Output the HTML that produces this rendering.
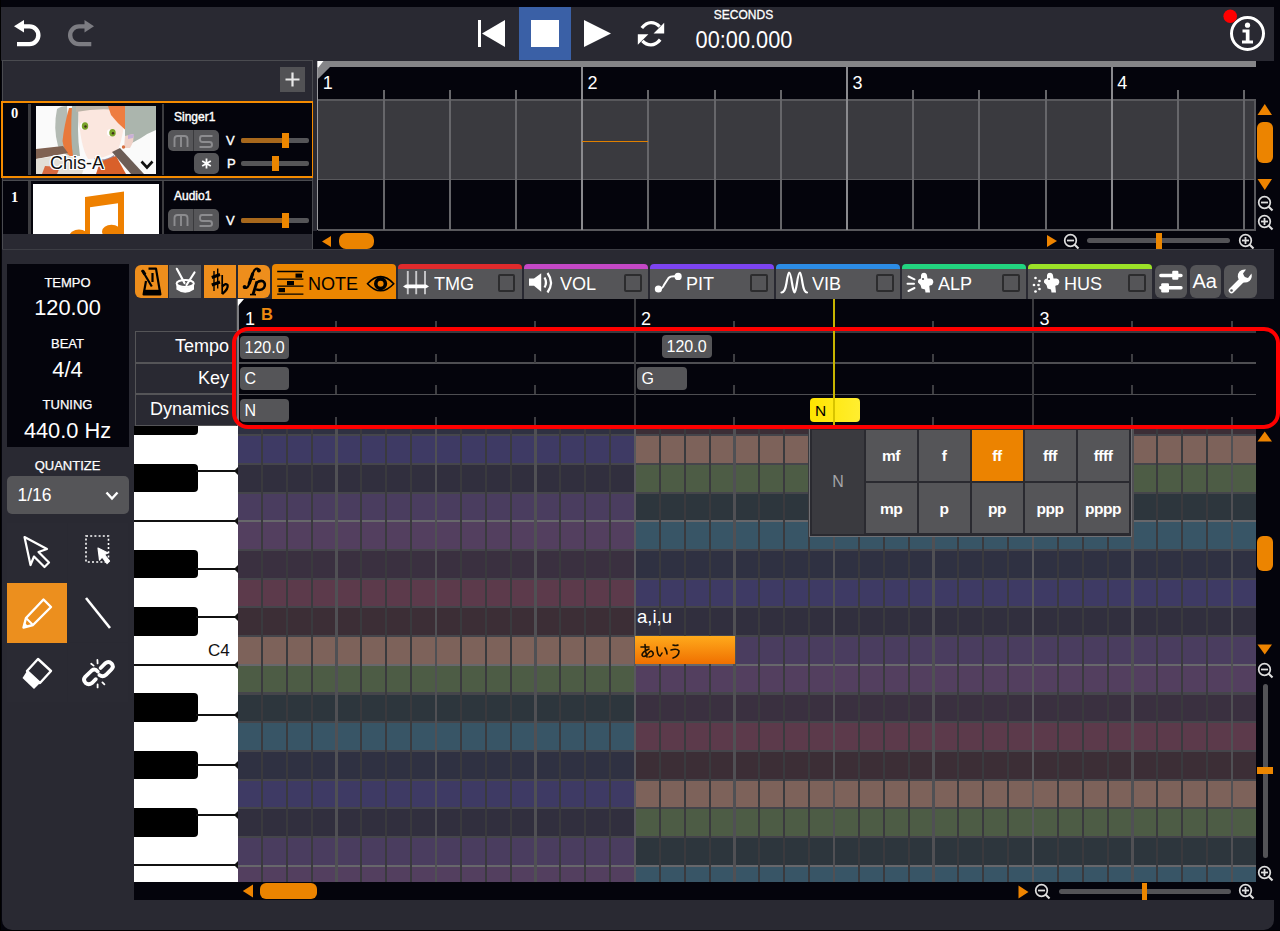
<!DOCTYPE html><html><head><meta charset="utf-8"><style>
html,body{margin:0;padding:0;}
body{width:1280px;height:931px;position:relative;overflow:hidden;background:#04040c;font-family:"Liberation Sans", sans-serif;}
div{box-sizing:border-box;}
svg{position:absolute;overflow:visible;}
</style></head><body>
<div style="position:absolute;left:1px;top:7px;width:1273px;height:54px;background:#292932;"></div>
<svg style="left:14px;top:19px;" width="30" height="30" viewBox="0 0 30 30"><path d="M9 7.4 H15.5 A8.85 8.85 0 0 1 15.5 25.1 H3" fill="none" stroke="#fff" stroke-width="4.4"/><path d="M0 7.2 L10 1 L10 13.4 Z" fill="#fff"/></svg>
<svg style="left:66px;top:19px;" width="30" height="30" viewBox="0 0 30 30"><path d="M19.5 7.4 H13 A8.85 8.85 0 0 0 13 25.1 H25.3" fill="none" stroke="#7c7c82" stroke-width="4.4"/><path d="M28 7.2 L18.5 1 L18.5 13.4 Z" fill="#7c7c82"/></svg>
<div style="position:absolute;left:519px;top:7px;width:52px;height:53px;background:#3a60a6;"></div>
<svg style="left:476px;top:19px;" width="32" height="30" viewBox="0 0 32 30"><rect x="2" y="1" width="3" height="27" fill="#fff"/><path d="M29 1 L29 28 L6 14.5 Z" fill="#fff"/></svg>
<div style="position:absolute;left:531px;top:20px;width:28px;height:27px;background:#fff;"></div>
<svg style="left:583px;top:19px;" width="30" height="30" viewBox="0 0 30 30"><path d="M1 1 L28 14.5 L1 28 Z" fill="#fff"/></svg>
<svg style="left:636px;top:21px;" width="30" height="26" viewBox="0 0 30 26"><path d="M5.8 7 Q10 1.6 15 1.6 Q20 1.6 23.6 5.6" fill="none" stroke="#fff" stroke-width="3.3"/><path d="M28.2 1.8 L28.2 12.6 L17.6 12.6 Z" fill="#fff"/><path d="M24.2 18.6 Q20 23.8 15 23.8 Q10 23.8 6.4 19.8" fill="none" stroke="#fff" stroke-width="3.3"/><path d="M1.8 13.2 L12.4 13.2 L1.8 23.8 Z" fill="#fff"/></svg>
<div style="position:absolute;left:593.5px;width:300px;text-align:center;top:9px;font-size:12px;line-height:1;color:#fff;white-space:nowrap;-webkit-text-stroke:0.3px #fff;">SECONDS</div>
<div style="position:absolute;left:593.5px;width:300px;text-align:center;top:29.2px;font-size:23.4px;line-height:1;color:#fff;white-space:nowrap;transform:scaleX(0.93);">00:00.000</div>
<svg style="left:1229px;top:15px;" width="38" height="38" viewBox="0 0 38 38"><circle cx="18.5" cy="18.5" r="16" fill="none" stroke="#fff" stroke-width="3"/><circle cx="18.5" cy="10.2" r="2.6" fill="#fff"/><path d="M13.5 14.5 H20.5 V25.5 H24 V28.5 H13 V25.5 H16.8 V17.5 H13.5 Z" fill="#fff"/></svg>
<svg style="left:1223px;top:9px;" width="15" height="15" viewBox="0 0 15 15"><circle cx="7.2" cy="7.2" r="6.8" fill="#f00"/></svg>
<div style="position:absolute;left:2px;top:60px;width:311px;height:190px;background:#292932;border:1px solid #4a4b50;"></div>
<div style="position:absolute;left:280px;top:67px;width:25px;height:25px;background:#525255;"></div>
<svg style="left:280px;top:67px;" width="25" height="25" viewBox="0 0 25 25"><path d="M12.5 5.5 V19.5 M5.5 12.5 H19.5" stroke="#e8e8e8" stroke-width="2.2"/></svg>
<div style="position:absolute;left:1px;top:101px;width:313px;height:77px;background:#04040c;border:2.8px solid #f58b00;"></div>
<div style="position:absolute;left:28px;top:104px;width:2.5px;height:71px;background:#3c3c40;"></div>
<div style="position:absolute;left:162px;top:104px;width:2px;height:71px;background:#3c3c40;"></div>
<div style="position:absolute;left:11px;top:106px;font-size:14.5px;line-height:1;color:#fff;white-space:nowrap;font-family:&quot;Liberation Serif&quot;,serif;font-weight:bold;">0</div>
<svg style="left:36px;top:106px;" width="120" height="68" viewBox="0 0 120 68">
<rect x="0" y="0" width="120" height="68" fill="#fafafa"/>
<path d="M21 3 Q25 0 31 0 L34 50 Q26 48 22 40 Q17 22 21 3 Z" fill="#b4bbb4"/>
<path d="M33 2 Q28 20 26.5 35 Q28 46 34 50 L37.5 50 Q35 30 37.5 2 Z" fill="#e8793c"/>
<path d="M36 0 L44 0 Q40 20 44 50 L37 50 Q34 30 36 0 Z" fill="#a9b3ab"/>
<path d="M42 3 L89 3 Q88 30 82 44 Q70 53 52 53 Q44 40 42 3 Z" fill="#fbe7df"/>
<path d="M40 0 L90 0 L90 5 Q65 1 40 6 Z" fill="#bcb3a6"/>
<path d="M72 0 L90 0 L89.5 24 Q82 18 75 9 Z" fill="#ee7d40"/>
<path d="M89 0 L120 0 L120 24 Q112 27 105 32 Q98 36 92 39 L89 30 Z" fill="#abb5ad"/>
<ellipse cx="47" cy="20" rx="3" ry="3.4" fill="#fff"/><ellipse cx="49" cy="20" rx="3.2" ry="3.8" fill="#7aa42a"/><circle cx="49.5" cy="20.5" r="1.2" fill="#40301a"/>
<ellipse cx="74" cy="26.7" rx="3" ry="3.4" fill="#fff"/><ellipse cx="76.5" cy="26.7" rx="3.2" ry="3.8" fill="#7aa42a"/><circle cx="77" cy="27.2" r="1.2" fill="#40301a"/>
<path d="M89 30 L97 28 Q99 34 94 42 L88 42 Z" fill="#f0d2c8"/><path d="M92 29 L98 28 L97 32 L92 33 Z" fill="#c8b0d8"/>
<circle cx="87.5" cy="41" r="1.7" fill="#d87040"/>
<path d="M0 43 L27 40 L32 47 L0 53 Z" fill="#806252"/>
<path d="M0 53 L30 49 L50 56 L46 68 L0 68 Z" fill="#e2ded6"/>
<path d="M9 60 L24 61 L21 68 L6 68 Z" fill="#d86a40"/>
<path d="M58 52 Q68 56 78 49 L80 56 Q70 60 60 58 Z" fill="#9a8a9a"/>
<path d="M64 56 L80 50 L90 68 L60 68 Z" fill="#d9602a"/>
<path d="M76 46 L84 42 L108 68 L95 68 Z" fill="#6c5d56"/>
</svg>
<div style="position:absolute;left:50px;top:154px;font-size:18px;line-height:1;color:#111;white-space:nowrap;text-shadow:1px 0 0 #fff,-1px 0 0 #fff,0 1px 0 #fff,0 -1px 0 #fff,1px 1px 0 #fff,-1px -1px 0 #fff,1px -1px 0 #fff,-1px 1px 0 #fff;">Chis-A</div>
<svg style="left:140px;top:160px;" width="14" height="10" viewBox="0 0 14 10"><path d="M1.5 1.5 L7 7.5 L12.5 1.5" fill="none" stroke="#111" stroke-width="2.6"/></svg>
<div style="position:absolute;left:3px;top:179.5px;width:309.5px;height:1.5px;background:#4a4b50;"></div>
<div style="position:absolute;left:3px;top:181px;width:309px;height:53px;background:#04040c;"></div>
<div style="position:absolute;left:27.5px;top:181px;width:3.5px;height:53px;background:#3c3c40;"></div>
<div style="position:absolute;left:162px;top:181px;width:2px;height:53px;background:#3c3c40;"></div>
<div style="position:absolute;left:11px;top:190px;font-size:14.5px;line-height:1;color:#fff;white-space:nowrap;font-family:&quot;Liberation Serif&quot;,serif;font-weight:bold;">1</div>
<div style="position:absolute;left:33px;top:184px;width:126px;height:50px;background:#fff;"></div>
<svg style="left:33px;top:184px;clip-path:inset(0 0 0 0);" width="126" height="50" viewBox="0 0 126 50"><path d="M52 13 L91 7.5 L91 50 L85 50 L85 19.2 L57 23.2 L57 50 L52 50 Z" fill="#ee8000"/><ellipse cx="46" cy="52" rx="9.5" ry="6.5" fill="#ee8000"/><ellipse cx="78.5" cy="47.5" rx="9.5" ry="6.8" fill="#ee8000"/></svg>
<div style="position:absolute;left:174px;top:110.5px;font-size:12px;line-height:1;color:#fff;white-space:nowrap;-webkit-text-stroke:0.4px #fff;">Singer1</div>
<div style="position:absolute;left:168px;top:129.5px;width:51px;height:21.5px;background:#565659;border-radius:5px;"></div>
<div style="position:absolute;left:192.5px;top:129.5px;width:1.5px;height:21.5px;background:#3a3a3d;"></div>
<svg style="left:172px;top:132.5px;" width="18" height="16" viewBox="0 0 18 16"><path d="M2.5 14 V6 Q2.5 3 5.5 3 H12.5 Q15.5 3 15.5 6 V14 M9 3.5 V14" fill="none" stroke="#8c8c8f" stroke-width="1.9"/></svg>
<svg style="left:197px;top:132.5px;" width="18" height="16" viewBox="0 0 18 16"><path d="M15.5 3 H5 Q3 3 3 5.5 V6.5 Q3 9 5.5 9 H12.5 Q15 9 15 11.5 V12 Q15 14 12.5 14 H2.5" fill="none" stroke="#8c8c8f" stroke-width="1.9"/></svg>
<div style="position:absolute;left:194px;top:152.5px;width:25px;height:21px;background:#565659;border-radius:5px;"></div>
<svg style="left:194px;top:152.5px;" width="25" height="21" viewBox="0 0 25 21"><path d="M12.5 5.5 V15.5 M8.2 8 L16.8 13 M8.2 13 L16.8 8" stroke="#fff" stroke-width="1.8"/></svg>
<div style="position:absolute;left:226px;top:134px;font-size:13px;line-height:1;color:#fff;white-space:nowrap;-webkit-text-stroke:0.4px #fff;">V</div>
<div style="position:absolute;left:227px;top:157px;font-size:13px;line-height:1;color:#fff;white-space:nowrap;-webkit-text-stroke:0.4px #fff;">P</div>
<div style="position:absolute;left:241px;top:138px;width:68px;height:4.5px;background:#555558;border-radius:2px;"></div>
<div style="position:absolute;left:241px;top:138px;width:41px;height:4.5px;background:#a8681c;border-radius:2px 0 0 2px;"></div>
<div style="position:absolute;left:282px;top:132.5px;width:7px;height:15px;background:#ec8600;"></div>
<div style="position:absolute;left:241px;top:161px;width:68px;height:4.5px;background:#555558;border-radius:2px;"></div>
<div style="position:absolute;left:272px;top:155.5px;width:7px;height:15px;background:#ec8600;"></div>
<div style="position:absolute;left:174px;top:189.5px;font-size:12px;line-height:1;color:#fff;white-space:nowrap;-webkit-text-stroke:0.4px #fff;">Audio1</div>
<div style="position:absolute;left:168px;top:209px;width:51px;height:21.5px;background:#565659;border-radius:5px;"></div>
<div style="position:absolute;left:192.5px;top:209px;width:1.5px;height:21.5px;background:#3a3a3d;"></div>
<svg style="left:172px;top:212px;" width="18" height="16" viewBox="0 0 18 16"><path d="M2.5 14 V6 Q2.5 3 5.5 3 H12.5 Q15.5 3 15.5 6 V14 M9 3.5 V14" fill="none" stroke="#8c8c8f" stroke-width="1.9"/></svg>
<svg style="left:197px;top:212px;" width="18" height="16" viewBox="0 0 18 16"><path d="M15.5 3 H5 Q3 3 3 5.5 V6.5 Q3 9 5.5 9 H12.5 Q15 9 15 11.5 V12 Q15 14 12.5 14 H2.5" fill="none" stroke="#8c8c8f" stroke-width="1.9"/></svg>
<div style="position:absolute;left:226px;top:214px;font-size:13px;line-height:1;color:#fff;white-space:nowrap;-webkit-text-stroke:0.4px #fff;">V</div>
<div style="position:absolute;left:241px;top:218px;width:68px;height:4.5px;background:#555558;border-radius:2px;"></div>
<div style="position:absolute;left:241px;top:218px;width:41px;height:4.5px;background:#a8681c;border-radius:2px 0 0 2px;"></div>
<div style="position:absolute;left:282px;top:212.5px;width:7px;height:15px;background:#ec8600;"></div>
<div style="position:absolute;left:313px;top:60px;width:4px;height:171px;background:#292932;"></div>
<div style="position:absolute;left:313px;top:231px;width:4px;height:19px;background:#04040c;"></div>
<div style="position:absolute;left:317px;top:61px;width:939px;height:189px;background:#04040c;"></div>
<svg style="left:317px;top:61px;" width="939" height="20" viewBox="0 0 939 20"><path d="M0 0 L939 0 L939 6 L13 6 L1.5 17.5 L0 17.5 Z" fill="#858588"/><path d="M0.5 0 L6.5 0 L0.5 7.5 Z" fill="#fff"/></svg>
<div style="position:absolute;left:318px;top:100px;width:938px;height:80px;background:#3a3a3f;"></div>
<div style="position:absolute;left:318px;top:99px;width:938px;height:1.5px;background:#58585c;"></div>
<div style="position:absolute;left:318px;top:178.8px;width:938px;height:1.5px;background:#58585c;"></div>
<div style="position:absolute;left:318px;top:229.3px;width:938px;height:1.5px;background:#58585c;"></div>
<div style="position:absolute;left:316.5px;top:67px;width:1.8px;height:163px;background:#9a9a9e;"></div>
<div style="position:absolute;left:382.5px;top:90px;width:2px;height:140px;background:#66666a;"></div>
<div style="position:absolute;left:448.7px;top:90px;width:2px;height:140px;background:#66666a;"></div>
<div style="position:absolute;left:514.9px;top:90px;width:2px;height:140px;background:#66666a;"></div>
<div style="position:absolute;left:581.1px;top:67px;width:2px;height:163px;background:#8a8a8e;"></div>
<div style="position:absolute;left:647.3px;top:90px;width:2px;height:140px;background:#66666a;"></div>
<div style="position:absolute;left:713.5px;top:90px;width:2px;height:140px;background:#66666a;"></div>
<div style="position:absolute;left:779.7px;top:90px;width:2px;height:140px;background:#66666a;"></div>
<div style="position:absolute;left:845.9px;top:67px;width:2px;height:163px;background:#8a8a8e;"></div>
<div style="position:absolute;left:912.1px;top:90px;width:2px;height:140px;background:#66666a;"></div>
<div style="position:absolute;left:978.3px;top:90px;width:2px;height:140px;background:#66666a;"></div>
<div style="position:absolute;left:1044.5px;top:90px;width:2px;height:140px;background:#66666a;"></div>
<div style="position:absolute;left:1110.7px;top:67px;width:2px;height:163px;background:#8a8a8e;"></div>
<div style="position:absolute;left:1176.9px;top:90px;width:2px;height:140px;background:#66666a;"></div>
<div style="position:absolute;left:1243.1px;top:90px;width:2px;height:140px;background:#66666a;"></div>
<div style="position:absolute;left:322.8px;top:74px;font-size:18px;line-height:1;color:#fff;white-space:nowrap;">1</div>
<div style="position:absolute;left:587.6px;top:74px;font-size:18px;line-height:1;color:#fff;white-space:nowrap;">2</div>
<div style="position:absolute;left:852.4000000000001px;top:74px;font-size:18px;line-height:1;color:#fff;white-space:nowrap;">3</div>
<div style="position:absolute;left:1117.2px;top:74px;font-size:18px;line-height:1;color:#fff;white-space:nowrap;">4</div>
<div style="position:absolute;left:582px;top:140.5px;width:66px;height:1.6px;background:#e08000;"></div>
<div style="position:absolute;left:1254.3px;top:99px;width:1.6px;height:131.5px;background:#58585c;"></div>
<svg style="left:321px;top:236px;" width="11" height="11" viewBox="0 0 11 11"><path d="M10 0 L10 11 L1 5.5 Z" fill="#ee8400"/></svg>
<div style="position:absolute;left:339px;top:232.5px;width:35px;height:16px;background:#ec8400;border-radius:7px;"></div>
<svg style="left:1047px;top:235px;" width="11" height="12" viewBox="0 0 11 12"><path d="M0 0 L0 12 L10 6 Z" fill="#ee8400"/></svg>
<svg style="left:1063px;top:233px;" width="17" height="17" viewBox="0 0 17 17"><circle cx="7.5" cy="7.5" r="5.8" fill="none" stroke="#dedede" stroke-width="1.7"/><path d="M11.5 11.5 L15.5 15.5" stroke="#dedede" stroke-width="2.2"/><path d="M4 7.5 H11" stroke="#dedede" stroke-width="1.8"/></svg>
<div style="position:absolute;left:1087px;top:237.5px;width:143px;height:5px;background:#535357;border-radius:3px;"></div>
<div style="position:absolute;left:1156px;top:232.5px;width:6px;height:16px;background:#ec8600;"></div>
<svg style="left:1238px;top:233px;" width="17" height="17" viewBox="0 0 17 17"><circle cx="7.5" cy="7.5" r="5.8" fill="none" stroke="#dedede" stroke-width="1.7"/><path d="M11.5 11.5 L15.5 15.5" stroke="#dedede" stroke-width="2.2"/><path d="M4 7.5 H11" stroke="#dedede" stroke-width="1.8"/><path d="M7.5 4 V11" stroke="#dedede" stroke-width="1.8"/></svg>
<div style="position:absolute;left:1256px;top:61px;width:18px;height:189px;background:#04040c;"></div>
<svg style="left:1257px;top:103px;" width="16" height="13" viewBox="0 0 16 13"><path d="M0.5 12 L15 12 L7.75 1 Z" fill="#ee8400"/></svg>
<div style="position:absolute;left:1257px;top:122px;width:16px;height:41px;background:#ec8400;border-radius:6px;"></div>
<svg style="left:1257px;top:178px;" width="16" height="13" viewBox="0 0 16 13"><path d="M0.5 1 L15 1 L7.75 12 Z" fill="#ee8400"/></svg>
<svg style="left:1257px;top:195px;" width="17" height="17" viewBox="0 0 17 17"><circle cx="7.5" cy="7.5" r="5.8" fill="none" stroke="#dedede" stroke-width="1.7"/><path d="M11.5 11.5 L15.5 15.5" stroke="#dedede" stroke-width="2.2"/><path d="M4 7.5 H11" stroke="#dedede" stroke-width="1.8"/></svg>
<svg style="left:1257px;top:214px;" width="17" height="17" viewBox="0 0 17 17"><circle cx="7.5" cy="7.5" r="5.8" fill="none" stroke="#dedede" stroke-width="1.7"/><path d="M11.5 11.5 L15.5 15.5" stroke="#dedede" stroke-width="2.2"/><path d="M4 7.5 H11" stroke="#dedede" stroke-width="1.8"/><path d="M7.5 4 V11" stroke="#dedede" stroke-width="1.8"/></svg>
<div style="position:absolute;left:1.5px;top:249px;width:1272.5px;height:680.5px;background:#292932;border-top:1.5px solid #3c3d44;border-radius:0 0 10px 10px;"></div>
<div style="position:absolute;left:7px;top:264px;width:121.5px;height:183px;background:#04040c;"></div>
<div style="position:absolute;left:-82.5px;width:300px;text-align:center;top:275.5px;font-size:13px;line-height:1;color:#fff;white-space:nowrap;-webkit-text-stroke:0.25px #fff;">TEMPO</div>
<div style="position:absolute;left:-82.5px;width:300px;text-align:center;top:297px;font-size:21.8px;line-height:1;color:#fff;white-space:nowrap;">120.00</div>
<div style="position:absolute;left:-82.5px;width:300px;text-align:center;top:336.5px;font-size:13px;line-height:1;color:#fff;white-space:nowrap;-webkit-text-stroke:0.25px #fff;">BEAT</div>
<div style="position:absolute;left:-82.5px;width:300px;text-align:center;top:359px;font-size:21.8px;line-height:1;color:#fff;white-space:nowrap;">4/4</div>
<div style="position:absolute;left:-82.5px;width:300px;text-align:center;top:397.5px;font-size:13px;line-height:1;color:#fff;white-space:nowrap;-webkit-text-stroke:0.25px #fff;">TUNING</div>
<div style="position:absolute;left:-82.5px;width:300px;text-align:center;top:419.7px;font-size:21.8px;line-height:1;color:#fff;white-space:nowrap;">440.0 Hz</div>
<div style="position:absolute;left:-82.5px;width:300px;text-align:center;top:459px;font-size:13px;line-height:1;color:#fff;white-space:nowrap;-webkit-text-stroke:0.25px #fff;">QUANTIZE</div>
<div style="position:absolute;left:7px;top:475.5px;width:121.5px;height:38.5px;background:#555558;border-radius:5px;"></div>
<div style="position:absolute;left:17.5px;top:486.5px;font-size:17.5px;line-height:1;color:#fff;white-space:nowrap;">1/16</div>
<svg style="left:105px;top:491px;" width="15" height="10" viewBox="0 0 15 10"><path d="M1.5 1.5 L7 7.5 L12.5 1.5" fill="none" stroke="#fff" stroke-width="2.4"/></svg>
<div style="position:absolute;left:7px;top:523px;width:60px;height:59.5px;background:#2a2a33;"></div>
<div style="position:absolute;left:67.5px;top:523px;width:60px;height:59.5px;background:#2a2a33;"></div>
<div style="position:absolute;left:67.5px;top:582.5px;width:60px;height:59.5px;background:#2a2a33;"></div>
<div style="position:absolute;left:7px;top:642.5px;width:60px;height:59.5px;background:#2a2a33;"></div>
<div style="position:absolute;left:67.5px;top:642.5px;width:60px;height:59.5px;background:#2a2a33;"></div>
<div style="position:absolute;left:7px;top:582.5px;width:60px;height:60px;background:#ec8f1e;"></div>
<div style="position:absolute;left:7px;top:582.5px;width:60px;height:60px;background:#ec8f1e;"></div>
<svg style="left:22px;top:535px;" width="32" height="35" viewBox="0 0 32 35"><path d="M2.5 2 L25 14 L16.5 17 L27 27.5 L22.5 32 L12 21.5 L8.5 30 Z" fill="none" stroke="#fff" stroke-width="2.2" stroke-linejoin="round"/></svg>
<svg style="left:85px;top:535px;" width="28" height="34" viewBox="0 0 28 34"><rect x="1" y="1" width="22.5" height="26" fill="none" stroke="#fff" stroke-width="1.6" stroke-dasharray="2,2.2"/><path d="M13 13 L23 18 L19.5 19.5 L24.5 26 L22 28.5 L17 22 L14.5 25 Z" fill="#fff" stroke="#fff" stroke-width="1.2" stroke-linejoin="round"/></svg>
<svg style="left:21px;top:597px;" width="32" height="33" viewBox="0 0 32 33"><path d="M22.5 2.5 L30 10 L12 28 L2.5 30.5 L5 21 Z" fill="none" stroke="#fff" stroke-width="2.4" stroke-linejoin="round"/><path d="M5 21 L12 28" stroke="#fff" stroke-width="2"/><path d="M3 25 L7.5 29.5 L2.5 30.5 Z" fill="#fff"/></svg>
<svg style="left:84px;top:596px;" width="28" height="34" viewBox="0 0 28 34"><path d="M2 2 L26 32" stroke="#fff" stroke-width="2.6"/></svg>
<svg style="left:21px;top:657px;" width="32" height="33" viewBox="0 0 32 33"><path d="M17 2 L30 14 L19 26 L6 14 Z" fill="none" stroke="#fff" stroke-width="2.4" stroke-linejoin="round"/><path d="M6 14 L19 26 L13 32 L1.5 21 Z" fill="#fff"/></svg>
<svg style="left:75px;top:650px;" width="45" height="45" viewBox="0 0 45 45"><path d="M22.8 21.6 Q20 18.2 16.6 20.6 L10.2 26.8 Q7.6 30 10.6 33 Q13.8 35.6 17 33 L20.8 29.2" fill="none" stroke="#fff" stroke-width="3.8" stroke-linecap="round"/><path d="M25.6 18 L30.4 13.2 Q33.6 10.4 36.6 13.6 Q39.2 16.6 36.4 19.4 L31 24.8 Q27.8 27.6 24.4 25" fill="none" stroke="#fff" stroke-width="3.8" stroke-linecap="round"/><path d="M16.2 13.8 L18.6 15.6 M22.4 10 L22.6 13.4 M27.4 32.4 L29.4 34.4 M22.6 34.4 L22.6 37.4" stroke="#fff" stroke-width="1.8" stroke-linecap="round"/></svg>
<div style="position:absolute;left:134.8px;top:264.6px;width:33.1px;height:33.1px;background:#ee8e1c;border-radius:6px 0 0 6px;"></div>
<div style="position:absolute;left:169px;top:264.6px;width:32.2px;height:33.1px;background:#555558;"></div>
<div style="position:absolute;left:203.6px;top:264.6px;width:32.3px;height:33.1px;background:#ee8e1c;"></div>
<div style="position:absolute;left:238.4px;top:264.6px;width:31.6px;height:33.1px;background:#ee8e1c;border-radius:0 6px 6px 0;"></div>
<svg style="left:134px;top:263px;" width="34" height="34" viewBox="0 0 34 34"><path d="M14.5 5.6 L22 5.6 L26.4 31.4 L9.6 31.4 L12 18" fill="none" stroke="#000" stroke-width="2.2" stroke-linejoin="round"/><rect x="9.8" y="26.8" width="16.5" height="4.6" fill="#000"/><path d="M8 7 L17.8 23.5" stroke="#000" stroke-width="2.2"/><path d="M8.5 7.5 L11 11.5" stroke="#000" stroke-width="3.2"/><rect x="17.4" y="10" width="2.2" height="9" fill="#000"/></svg>
<svg style="left:169px;top:263px;" width="34" height="34" viewBox="0 0 34 34"><path d="M7.8 5.8 L15.5 20 M25.5 9.5 L17.5 22" stroke="#fff" stroke-width="2.2" stroke-linecap="round"/><ellipse cx="16.2" cy="20.5" rx="8.6" ry="3.6" fill="none" stroke="#fff" stroke-width="2"/><path d="M7.4 21.5 V26.5 Q16.2 33 25 26.5 V21.5 Q16.2 28 7.4 21.5 Z" fill="#fff"/></svg>
<svg style="left:202px;top:263px;" width="34" height="34" viewBox="0 0 34 34"><path d="M12 8 V28 M15.7 5.5 V25.5" stroke="#000" stroke-width="1.4"/><path d="M9.8 14.5 L18 11.5 M9.8 22 L18 19" stroke="#000" stroke-width="3"/><path d="M20.2 12 V31" stroke="#000" stroke-width="1.7"/><path d="M20.2 23.5 Q24 19.5 25.6 22 Q26.5 26 20.2 31" fill="none" stroke="#000" stroke-width="2.3"/></svg>
<svg style="left:238px;top:263px;" width="34" height="34" viewBox="0 0 34 34"><path d="M21.5 7.5 Q19.5 4 16.5 7 Q15 9 13 16 L10.5 22.5 Q9 26 6 24.5" fill="none" stroke="#000" stroke-width="2.1" stroke-linecap="round"/><path d="M14.6 11 L11.2 20.5" stroke="#000" stroke-width="3.2" stroke-linecap="round"/><circle cx="20.8" cy="7.6" r="2" fill="#000"/><circle cx="6.6" cy="23.8" r="1.9" fill="#000"/><path d="M10.8 16.2 H17" stroke="#000" stroke-width="1.4"/><path d="M19 18.5 L15 31.5" stroke="#000" stroke-width="2.8"/><path d="M12 31.6 H18" stroke="#000" stroke-width="1.6"/><path d="M18.2 20.2 Q21.5 17 25 18.2 Q28.2 20.5 26 24.8 Q23.5 28 18 26.4" fill="none" stroke="#000" stroke-width="2.5"/></svg>
<div style="position:absolute;left:271.8px;top:264.4px;width:124.6px;height:34.6px;background:#ec8600;border-radius:4px 4px 0 0;"></div>
<svg style="left:271.8px;top:263px;" width="34" height="34" viewBox="0 0 34 34"><path d="M5.2 8.5 H31.4 M5.2 16.1 H31.4 M5.2 23.2 H31.4 M5.2 31.1 H31.4" stroke="#000" stroke-width="1.3"/><rect x="23.5" y="10.5" width="6.5" height="4.2" fill="#000"/><rect x="15" y="18" width="7" height="4.2" fill="#000"/><rect x="6.5" y="25" width="6.5" height="4.2" fill="#000"/></svg>
<svg style="left:366px;top:273px;" width="30" height="22" viewBox="0 0 30 22"><path d="M1.5 10.7 Q14.6 -3.5 27.7 10.7 Q14.6 24.9 1.5 10.7 Z" fill="none" stroke="#000" stroke-width="1.6"/><circle cx="14.6" cy="10.7" r="4.8" fill="none" stroke="#000" stroke-width="3.6"/></svg>
<div style="position:absolute;left:308px;top:273.5px;font-size:19px;line-height:1;color:#000;white-space:nowrap;transform:scaleX(0.95);transform-origin:0 0;">NOTE</div>
<div style="position:absolute;left:397.8px;top:264.4px;width:124.2px;height:34.6px;background:#555558;border-radius:4px 4px 0 0;border-top:5.4px solid #e02a2c;"></div>
<div style="position:absolute;left:497.8px;top:274px;width:17.5px;height:17.5px;border:2.2px solid #2c2c2e;border-radius:2px;"></div>
<svg style="left:397.8px;top:263px;" width="34" height="34" viewBox="0 0 34 34"><path d="M9.8 8 V31.3 M18.2 8 V31.3 M27 8 V31.3" stroke="#c8c8ca" stroke-width="1.9"/><path d="M5 23.4 L8 21.6 H28 L31 23.4 L28 25.2 H8 Z" fill="#fff"/></svg>
<div style="position:absolute;left:434px;top:273.5px;font-size:19px;line-height:1;color:#fff;white-space:nowrap;transform:scaleX(0.95);transform-origin:0 0;">TMG</div>
<div style="position:absolute;left:524px;top:264.4px;width:124.2px;height:34.6px;background:#555558;border-radius:4px 4px 0 0;border-top:5.4px solid #c448c6;"></div>
<div style="position:absolute;left:624px;top:274px;width:17.5px;height:17.5px;border:2.2px solid #2c2c2e;border-radius:2px;"></div>
<svg style="left:524px;top:263px;" width="34" height="34" viewBox="0 0 34 34"><path d="M5 15.6 H10 L17.2 10.3 V28.7 L10 22.8 H5 Z" fill="#fff"/><path d="M20.5 14.5 Q23.5 19.5 20.5 24.5" fill="none" stroke="#fff" stroke-width="2.2"/><path d="M23.5 10 Q30.5 19.5 23.5 29.5" fill="none" stroke="#fff" stroke-width="2.2"/></svg>
<div style="position:absolute;left:559.5px;top:273.5px;font-size:19px;line-height:1;color:#fff;white-space:nowrap;transform:scaleX(0.95);transform-origin:0 0;">VOL</div>
<div style="position:absolute;left:650px;top:264.4px;width:124.2px;height:34.6px;background:#555558;border-radius:4px 4px 0 0;border-top:5.4px solid #7d44f2;"></div>
<div style="position:absolute;left:750px;top:274px;width:17.5px;height:17.5px;border:2.2px solid #2c2c2e;border-radius:2px;"></div>
<svg style="left:650px;top:263px;" width="34" height="34" viewBox="0 0 34 34"><path d="M8.4 26 Q12.5 26 14 22 L18.5 15 Q20.5 12.8 27 13.4" fill="none" stroke="#fff" stroke-width="2"/><circle cx="8.4" cy="26" r="3.6" fill="#fff"/><circle cx="28.1" cy="13.4" r="3.6" fill="#fff"/></svg>
<div style="position:absolute;left:686px;top:273.5px;font-size:19px;line-height:1;color:#fff;white-space:nowrap;transform:scaleX(0.95);transform-origin:0 0;">PIT</div>
<div style="position:absolute;left:776px;top:264.4px;width:124.2px;height:34.6px;background:#555558;border-radius:4px 4px 0 0;border-top:5.4px solid #2c8ce6;"></div>
<div style="position:absolute;left:876px;top:274px;width:17.5px;height:17.5px;border:2.2px solid #2c2c2e;border-radius:2px;"></div>
<svg style="left:776px;top:263px;" width="34" height="34" viewBox="0 0 34 34"><path d="M5.5 29.5 Q9 29.5 10.5 20 Q12 9.5 13 9.5 Q14.5 9.5 16 20 Q17.5 29.5 18.5 29.5 Q19.5 29.5 21 20 Q22.5 9.5 24 9.5 Q25 9.5 26.5 20 Q28 29.5 31 29.5" fill="none" stroke="#fff" stroke-width="2.2" stroke-linecap="round"/></svg>
<div style="position:absolute;left:811.5px;top:273.5px;font-size:19px;line-height:1;color:#fff;white-space:nowrap;transform:scaleX(0.95);transform-origin:0 0;">VIB</div>
<div style="position:absolute;left:902px;top:264.4px;width:124.2px;height:34.6px;background:#555558;border-radius:4px 4px 0 0;border-top:5.4px solid #22d480;"></div>
<div style="position:absolute;left:1002px;top:274px;width:17.5px;height:17.5px;border:2.2px solid #2c2c2e;border-radius:2px;"></div>
<svg style="left:902px;top:263px;" width="34" height="34" viewBox="0 0 34 34"><path d="M19 12 Q19.5 9.7 22 9.7 Q24.5 9.7 25 12.5 L25.5 15.5 L28.5 15.5 Q31.5 16 31.3 19.5 Q31 22 28 22.5 L27.3 23 L28 29.5 L23.5 29.5 L23 26.5 L19.5 25.5 L18.5 22 L16 19.5 Q15.5 16 19 15.5 Z" fill="#fff"/><circle cx="21" cy="16" r="1.1" fill="#555558"/><path d="M6.5 13.5 L12.5 16.3 M5.5 20.8 H12 M6.5 28 L12.5 25" stroke="#fff" stroke-width="2" stroke-linecap="round"/></svg>
<div style="position:absolute;left:938px;top:273.5px;font-size:19px;line-height:1;color:#fff;white-space:nowrap;transform:scaleX(0.95);transform-origin:0 0;">ALP</div>
<div style="position:absolute;left:1028px;top:264.4px;width:124.2px;height:34.6px;background:#555558;border-radius:4px 4px 0 0;border-top:5.4px solid #9ce228;"></div>
<div style="position:absolute;left:1128px;top:274px;width:17.5px;height:17.5px;border:2.2px solid #2c2c2e;border-radius:2px;"></div>
<svg style="left:1028px;top:263px;" width="34" height="34" viewBox="0 0 34 34"><path d="M19 12 Q19.5 9.7 22 9.7 Q24.5 9.7 25 12.5 L25.5 15.5 L28.5 15.5 Q31.5 16 31.3 19.5 Q31 22 28 22.5 L27.3 23 L28 29.5 L23.5 29.5 L23 26.5 L19.5 25.5 L18.5 22 L16 19.5 Q15.5 16 19 15.5 Z" fill="#fff"/><circle cx="21" cy="16" r="1.1" fill="#555558"/><circle cx="7.5" cy="15" r="1.35" fill="#fff"/><circle cx="11.5" cy="18" r="1.35" fill="#fff"/><circle cx="6" cy="22" r="1.35" fill="#fff"/><circle cx="10.5" cy="22" r="1.35" fill="#fff"/><circle cx="11.5" cy="26" r="1.35" fill="#fff"/><circle cx="7.5" cy="28.5" r="1.35" fill="#fff"/></svg>
<div style="position:absolute;left:1064px;top:273.5px;font-size:19px;line-height:1;color:#fff;white-space:nowrap;transform:scaleX(0.95);transform-origin:0 0;">HUS</div>
<div style="position:absolute;left:1155px;top:265.2px;width:31.8px;height:32.6px;background:#555558;border-radius:6px;"></div>
<svg style="left:1150px;top:260px;" width="40" height="40" viewBox="0 0 40 40"><path d="M10.8 15.5 H31 M10.8 27.7 H31" stroke="#fff" stroke-width="3.4" stroke-linecap="round"/><rect x="22.2" y="10.7" width="6.2" height="9.1" rx="1.2" fill="#fff"/><rect x="11.2" y="23.2" width="7.8" height="9.3" rx="1.2" fill="#fff"/></svg>
<div style="position:absolute;left:1189.5px;top:265.2px;width:31.5px;height:32.6px;background:#555558;border-radius:6px;"></div>
<div style="position:absolute;left:1192.5px;top:270.5px;font-size:20px;line-height:1;color:#fff;white-space:nowrap;">Aa</div>
<div style="position:absolute;left:1224px;top:265.2px;width:32.5px;height:32.6px;background:#555558;border-radius:6px;"></div>
<svg style="left:1150px;top:260px;" width="110" height="40" viewBox="0 0 110 40"><path d="M81.5 30.5 L93 19" stroke="#fff" stroke-width="5.5" stroke-linecap="round"/><path d="M90.5 21.5 A6.8 6.8 0 0 1 89.5 11.5 Q92 9 96 9.5 L93 13.5 L94.5 17 L98 18 L101.5 13.5 Q102.5 18 99.5 21 Q96 23.5 92 22 Z" fill="#fff"/><circle cx="81.5" cy="30.5" r="1.3" fill="#555558"/></svg>
<div style="position:absolute;left:238px;top:298.5px;width:1018px;height:32.5px;background:#04040c;"></div>
<div style="position:absolute;left:238px;top:331px;width:1018px;height:94.5px;background:#04040c;"></div>
<div style="position:absolute;left:134.5px;top:331px;width:104px;height:31.5px;background:#292932;border:1.5px solid #555558;"></div>
<div style="position:absolute;left:134.5px;top:362.5px;width:104px;height:31.5px;background:#292932;border:1.5px solid #555558;"></div>
<div style="position:absolute;left:134.5px;top:394px;width:104px;height:31.5px;background:#292932;border:1.5px solid #555558;"></div>
<div style="position:absolute;left:-71px;width:300px;text-align:right;top:337px;font-size:18px;line-height:1;color:#fff;white-space:nowrap;">Tempo</div>
<div style="position:absolute;left:-71px;width:300px;text-align:right;top:368.5px;font-size:18px;line-height:1;color:#fff;white-space:nowrap;">Key</div>
<div style="position:absolute;left:-71px;width:300px;text-align:right;top:400px;font-size:18px;line-height:1;color:#fff;white-space:nowrap;">Dynamics</div>
<div style="position:absolute;left:238px;top:331.2px;width:1018px;height:1.5px;background:#3a3a40;"></div>
<div style="position:absolute;left:238px;top:362.3px;width:1018px;height:1.5px;background:#4e4e52;"></div>
<div style="position:absolute;left:238px;top:393.8px;width:1018px;height:1.5px;background:#4e4e52;"></div>
<div style="position:absolute;left:235.65px;top:298.5px;width:2.5px;height:127px;background:#3a3a3e;"></div>
<div style="position:absolute;left:335.4px;top:321px;width:2px;height:10px;background:#3e3e42;"></div>
<div style="position:absolute;left:335.4px;top:353.5px;width:2px;height:9px;background:#3e3e42;"></div>
<div style="position:absolute;left:335.4px;top:385px;width:2px;height:9px;background:#3e3e42;"></div>
<div style="position:absolute;left:335.4px;top:416.5px;width:2px;height:9px;background:#3e3e42;"></div>
<div style="position:absolute;left:434.9px;top:321px;width:2px;height:10px;background:#3e3e42;"></div>
<div style="position:absolute;left:434.9px;top:353.5px;width:2px;height:9px;background:#3e3e42;"></div>
<div style="position:absolute;left:434.9px;top:385px;width:2px;height:9px;background:#3e3e42;"></div>
<div style="position:absolute;left:434.9px;top:416.5px;width:2px;height:9px;background:#3e3e42;"></div>
<div style="position:absolute;left:534.4px;top:321px;width:2px;height:10px;background:#3e3e42;"></div>
<div style="position:absolute;left:534.4px;top:353.5px;width:2px;height:9px;background:#3e3e42;"></div>
<div style="position:absolute;left:534.4px;top:385px;width:2px;height:9px;background:#3e3e42;"></div>
<div style="position:absolute;left:534.4px;top:416.5px;width:2px;height:9px;background:#3e3e42;"></div>
<div style="position:absolute;left:633.65px;top:298.5px;width:2.5px;height:127px;background:#3a3a3e;"></div>
<div style="position:absolute;left:733.4px;top:321px;width:2px;height:10px;background:#3e3e42;"></div>
<div style="position:absolute;left:733.4px;top:353.5px;width:2px;height:9px;background:#3e3e42;"></div>
<div style="position:absolute;left:733.4px;top:385px;width:2px;height:9px;background:#3e3e42;"></div>
<div style="position:absolute;left:733.4px;top:416.5px;width:2px;height:9px;background:#3e3e42;"></div>
<div style="position:absolute;left:832.9px;top:321px;width:2px;height:10px;background:#3e3e42;"></div>
<div style="position:absolute;left:832.9px;top:353.5px;width:2px;height:9px;background:#3e3e42;"></div>
<div style="position:absolute;left:832.9px;top:385px;width:2px;height:9px;background:#3e3e42;"></div>
<div style="position:absolute;left:832.9px;top:416.5px;width:2px;height:9px;background:#3e3e42;"></div>
<div style="position:absolute;left:932.4px;top:321px;width:2px;height:10px;background:#3e3e42;"></div>
<div style="position:absolute;left:932.4px;top:353.5px;width:2px;height:9px;background:#3e3e42;"></div>
<div style="position:absolute;left:932.4px;top:385px;width:2px;height:9px;background:#3e3e42;"></div>
<div style="position:absolute;left:932.4px;top:416.5px;width:2px;height:9px;background:#3e3e42;"></div>
<div style="position:absolute;left:1031.65px;top:298.5px;width:2.5px;height:127px;background:#3a3a3e;"></div>
<div style="position:absolute;left:1131.4px;top:321px;width:2px;height:10px;background:#3e3e42;"></div>
<div style="position:absolute;left:1131.4px;top:353.5px;width:2px;height:9px;background:#3e3e42;"></div>
<div style="position:absolute;left:1131.4px;top:385px;width:2px;height:9px;background:#3e3e42;"></div>
<div style="position:absolute;left:1131.4px;top:416.5px;width:2px;height:9px;background:#3e3e42;"></div>
<div style="position:absolute;left:1230.9px;top:321px;width:2px;height:10px;background:#3e3e42;"></div>
<div style="position:absolute;left:1230.9px;top:353.5px;width:2px;height:9px;background:#3e3e42;"></div>
<div style="position:absolute;left:1230.9px;top:385px;width:2px;height:9px;background:#3e3e42;"></div>
<div style="position:absolute;left:1230.9px;top:416.5px;width:2px;height:9px;background:#3e3e42;"></div>
<div style="position:absolute;left:237.2px;top:299px;width:1.8px;height:126.5px;background:#7c7c80;"></div>
<svg style="left:237.5px;top:299px;" width="10" height="10" viewBox="0 0 10 10"><path d="M0 0 L6 0 L0 7 Z" fill="#fff"/></svg>
<div style="position:absolute;left:245px;top:309.5px;font-size:18px;line-height:1;color:#fff;white-space:nowrap;">1</div>
<div style="position:absolute;left:641px;top:309.5px;font-size:18px;line-height:1;color:#fff;white-space:nowrap;">2</div>
<div style="position:absolute;left:1039.5px;top:309.5px;font-size:18px;line-height:1;color:#fff;white-space:nowrap;">3</div>
<div style="position:absolute;left:261px;top:305.5px;font-size:16.5px;line-height:1;color:#ee8a10;white-space:nowrap;font-weight:bold;">B</div>
<div style="position:absolute;left:240px;top:335.5px;width:49px;height:23px;background:#555558;border-radius:4px;"></div>
<div style="position:absolute;left:244.5px;top:339.5px;font-size:16px;line-height:1;color:#fff;white-space:nowrap;">120.0</div>
<div style="position:absolute;left:240px;top:367px;width:49px;height:23px;background:#555558;border-radius:4px;"></div>
<div style="position:absolute;left:244.5px;top:371px;font-size:16px;line-height:1;color:#fff;white-space:nowrap;">C</div>
<div style="position:absolute;left:240px;top:398.5px;width:49px;height:23px;background:#555558;border-radius:4px;"></div>
<div style="position:absolute;left:244.5px;top:402.5px;font-size:16px;line-height:1;color:#fff;white-space:nowrap;">N</div>
<div style="position:absolute;left:662px;top:335px;width:50px;height:23px;background:#555558;border-radius:4px;"></div>
<div style="position:absolute;left:666.5px;top:339px;font-size:16px;line-height:1;color:#fff;white-space:nowrap;">120.0</div>
<div style="position:absolute;left:637px;top:366.8px;width:49.5px;height:23px;background:#555558;border-radius:4px;"></div>
<div style="position:absolute;left:641.5px;top:370.8px;font-size:16px;line-height:1;color:#fff;white-space:nowrap;">G</div>
<div style="position:absolute;left:238px;top:425.5px;width:1018px;height:456.5px;overflow:hidden;background:#333;">
<div style="position:absolute;left:0;top:-48.00px;width:397.40px;height:28.7px;background:#385566;"></div>
<div style="position:absolute;left:397.40px;top:-48.00px;width:700px;height:28.7px;background:#5c3a4b;"></div>
<div style="position:absolute;left:0;top:-19.30px;width:397.40px;height:28.7px;background:#2f3142;"></div>
<div style="position:absolute;left:397.40px;top:-19.30px;width:700px;height:28.7px;background:#3c2e36;"></div>
<div style="position:absolute;left:0;top:9.40px;width:397.40px;height:28.7px;background:#3e3a64;"></div>
<div style="position:absolute;left:397.40px;top:9.40px;width:700px;height:28.7px;background:#7d625a;"></div>
<div style="position:absolute;left:0;top:38.10px;width:397.40px;height:28.7px;background:#312f3e;"></div>
<div style="position:absolute;left:397.40px;top:38.10px;width:700px;height:28.7px;background:#4d5c45;"></div>
<div style="position:absolute;left:0;top:66.80px;width:397.40px;height:28.7px;background:#4a3d5f;"></div>
<div style="position:absolute;left:397.40px;top:66.80px;width:700px;height:28.7px;background:#2d363d;"></div>
<div style="position:absolute;left:0;top:95.50px;width:397.40px;height:28.7px;background:#533f5f;"></div>
<div style="position:absolute;left:397.40px;top:95.50px;width:700px;height:28.7px;background:#385566;"></div>
<div style="position:absolute;left:0;top:124.20px;width:397.40px;height:28.7px;background:#3a3040;"></div>
<div style="position:absolute;left:397.40px;top:124.20px;width:700px;height:28.7px;background:#2f3142;"></div>
<div style="position:absolute;left:0;top:152.90px;width:397.40px;height:28.7px;background:#5c3a4b;"></div>
<div style="position:absolute;left:397.40px;top:152.90px;width:700px;height:28.7px;background:#3e3a64;"></div>
<div style="position:absolute;left:0;top:181.60px;width:397.40px;height:28.7px;background:#3c2e36;"></div>
<div style="position:absolute;left:397.40px;top:181.60px;width:700px;height:28.7px;background:#312f3e;"></div>
<div style="position:absolute;left:0;top:210.30px;width:397.40px;height:28.7px;background:#7d625a;"></div>
<div style="position:absolute;left:397.40px;top:210.30px;width:700px;height:28.7px;background:#4a3d5f;"></div>
<div style="position:absolute;left:0;top:239.00px;width:397.40px;height:28.7px;background:#4d5c45;"></div>
<div style="position:absolute;left:397.40px;top:239.00px;width:700px;height:28.7px;background:#533f5f;"></div>
<div style="position:absolute;left:0;top:267.70px;width:397.40px;height:28.7px;background:#2d363d;"></div>
<div style="position:absolute;left:397.40px;top:267.70px;width:700px;height:28.7px;background:#3a3040;"></div>
<div style="position:absolute;left:0;top:296.40px;width:397.40px;height:28.7px;background:#385566;"></div>
<div style="position:absolute;left:397.40px;top:296.40px;width:700px;height:28.7px;background:#5c3a4b;"></div>
<div style="position:absolute;left:0;top:325.10px;width:397.40px;height:28.7px;background:#2f3142;"></div>
<div style="position:absolute;left:397.40px;top:325.10px;width:700px;height:28.7px;background:#3c2e36;"></div>
<div style="position:absolute;left:0;top:353.80px;width:397.40px;height:28.7px;background:#3e3a64;"></div>
<div style="position:absolute;left:397.40px;top:353.80px;width:700px;height:28.7px;background:#7d625a;"></div>
<div style="position:absolute;left:0;top:382.50px;width:397.40px;height:28.7px;background:#312f3e;"></div>
<div style="position:absolute;left:397.40px;top:382.50px;width:700px;height:28.7px;background:#4d5c45;"></div>
<div style="position:absolute;left:0;top:411.20px;width:397.40px;height:28.7px;background:#4a3d5f;"></div>
<div style="position:absolute;left:397.40px;top:411.20px;width:700px;height:28.7px;background:#2d363d;"></div>
<div style="position:absolute;left:0;top:439.90px;width:397.40px;height:28.7px;background:#533f5f;"></div>
<div style="position:absolute;left:397.40px;top:439.90px;width:700px;height:28.7px;background:#385566;"></div>
<div style="position:absolute;left:0;top:-48.75px;width:1018px;height:2.1px;background:#45454b;"></div>
<div style="position:absolute;left:0;top:-20.05px;width:1018px;height:2.1px;background:#45454b;"></div>
<div style="position:absolute;left:0;top:8.65px;width:1018px;height:2.1px;background:#45454b;"></div>
<div style="position:absolute;left:0;top:37.35px;width:1018px;height:2.1px;background:#45454b;"></div>
<div style="position:absolute;left:0;top:66.05px;width:1018px;height:2.1px;background:#45454b;"></div>
<div style="position:absolute;left:0;top:94.75px;width:1018px;height:2.1px;background:#67676b;"></div>
<div style="position:absolute;left:0;top:123.45px;width:1018px;height:2.1px;background:#45454b;"></div>
<div style="position:absolute;left:0;top:152.15px;width:1018px;height:2.1px;background:#45454b;"></div>
<div style="position:absolute;left:0;top:180.85px;width:1018px;height:2.1px;background:#45454b;"></div>
<div style="position:absolute;left:0;top:209.55px;width:1018px;height:2.1px;background:#45454b;"></div>
<div style="position:absolute;left:0;top:238.25px;width:1018px;height:2.1px;background:#67676b;"></div>
<div style="position:absolute;left:0;top:266.95px;width:1018px;height:2.1px;background:#45454b;"></div>
<div style="position:absolute;left:0;top:295.65px;width:1018px;height:2.1px;background:#45454b;"></div>
<div style="position:absolute;left:0;top:324.35px;width:1018px;height:2.1px;background:#45454b;"></div>
<div style="position:absolute;left:0;top:353.05px;width:1018px;height:2.1px;background:#45454b;"></div>
<div style="position:absolute;left:0;top:381.75px;width:1018px;height:2.1px;background:#45454b;"></div>
<div style="position:absolute;left:0;top:410.45px;width:1018px;height:2.1px;background:#45454b;"></div>
<div style="position:absolute;left:0;top:439.15px;width:1018px;height:2.1px;background:#67676b;"></div>
<div style="position:absolute;left:-2.40px;top:0;width:2.6px;height:500px;background:#58585c;"></div>
<div style="position:absolute;left:22.78px;top:0;width:2px;height:500px;background:#3a3a3e;"></div>
<div style="position:absolute;left:47.65px;top:0;width:2px;height:500px;background:#3a3a3e;"></div>
<div style="position:absolute;left:72.53px;top:0;width:2px;height:500px;background:#3a3a3e;"></div>
<div style="position:absolute;left:97.10px;top:0;width:2.6px;height:500px;background:#505054;"></div>
<div style="position:absolute;left:122.28px;top:0;width:2px;height:500px;background:#3a3a3e;"></div>
<div style="position:absolute;left:147.15px;top:0;width:2px;height:500px;background:#3a3a3e;"></div>
<div style="position:absolute;left:172.03px;top:0;width:2px;height:500px;background:#3a3a3e;"></div>
<div style="position:absolute;left:196.60px;top:0;width:2.6px;height:500px;background:#505054;"></div>
<div style="position:absolute;left:221.78px;top:0;width:2px;height:500px;background:#3a3a3e;"></div>
<div style="position:absolute;left:246.65px;top:0;width:2px;height:500px;background:#3a3a3e;"></div>
<div style="position:absolute;left:271.52px;top:0;width:2px;height:500px;background:#3a3a3e;"></div>
<div style="position:absolute;left:296.10px;top:0;width:2.6px;height:500px;background:#505054;"></div>
<div style="position:absolute;left:321.27px;top:0;width:2px;height:500px;background:#3a3a3e;"></div>
<div style="position:absolute;left:346.15px;top:0;width:2px;height:500px;background:#3a3a3e;"></div>
<div style="position:absolute;left:371.02px;top:0;width:2px;height:500px;background:#3a3a3e;"></div>
<div style="position:absolute;left:395.60px;top:0;width:2.6px;height:500px;background:#58585c;"></div>
<div style="position:absolute;left:420.77px;top:0;width:2px;height:500px;background:#3a3a3e;"></div>
<div style="position:absolute;left:445.65px;top:0;width:2px;height:500px;background:#3a3a3e;"></div>
<div style="position:absolute;left:470.52px;top:0;width:2px;height:500px;background:#3a3a3e;"></div>
<div style="position:absolute;left:495.10px;top:0;width:2.6px;height:500px;background:#505054;"></div>
<div style="position:absolute;left:520.27px;top:0;width:2px;height:500px;background:#3a3a3e;"></div>
<div style="position:absolute;left:545.15px;top:0;width:2px;height:500px;background:#3a3a3e;"></div>
<div style="position:absolute;left:570.02px;top:0;width:2px;height:500px;background:#3a3a3e;"></div>
<div style="position:absolute;left:594.60px;top:0;width:2.6px;height:500px;background:#505054;"></div>
<div style="position:absolute;left:619.77px;top:0;width:2px;height:500px;background:#3a3a3e;"></div>
<div style="position:absolute;left:644.65px;top:0;width:2px;height:500px;background:#3a3a3e;"></div>
<div style="position:absolute;left:669.52px;top:0;width:2px;height:500px;background:#3a3a3e;"></div>
<div style="position:absolute;left:694.10px;top:0;width:2.6px;height:500px;background:#505054;"></div>
<div style="position:absolute;left:719.27px;top:0;width:2px;height:500px;background:#3a3a3e;"></div>
<div style="position:absolute;left:744.15px;top:0;width:2px;height:500px;background:#3a3a3e;"></div>
<div style="position:absolute;left:769.02px;top:0;width:2px;height:500px;background:#3a3a3e;"></div>
<div style="position:absolute;left:793.60px;top:0;width:2.6px;height:500px;background:#58585c;"></div>
<div style="position:absolute;left:818.77px;top:0;width:2px;height:500px;background:#3a3a3e;"></div>
<div style="position:absolute;left:843.65px;top:0;width:2px;height:500px;background:#3a3a3e;"></div>
<div style="position:absolute;left:868.52px;top:0;width:2px;height:500px;background:#3a3a3e;"></div>
<div style="position:absolute;left:893.10px;top:0;width:2.6px;height:500px;background:#505054;"></div>
<div style="position:absolute;left:918.27px;top:0;width:2px;height:500px;background:#3a3a3e;"></div>
<div style="position:absolute;left:943.15px;top:0;width:2px;height:500px;background:#3a3a3e;"></div>
<div style="position:absolute;left:968.02px;top:0;width:2px;height:500px;background:#3a3a3e;"></div>
<div style="position:absolute;left:992.60px;top:0;width:2.6px;height:500px;background:#505054;"></div>
<div style="position:absolute;left:1017.77px;top:0;width:2px;height:500px;background:#3a3a3e;"></div>
</div>
<div style="position:absolute;left:134px;top:425.5px;width:104px;height:456.5px;background:#fff;overflow:hidden;">
<div style="position:absolute;left:0.00px;top:-19.30px;width:64px;height:28.7px;background:#000;border-radius:0 4px 4px 0;"></div>
<div style="position:absolute;left:0.00px;top:38.10px;width:64px;height:28.7px;background:#000;border-radius:0 4px 4px 0;"></div>
<div style="position:absolute;left:0.00px;top:124.20px;width:64px;height:28.7px;background:#000;border-radius:0 4px 4px 0;"></div>
<div style="position:absolute;left:0.00px;top:181.60px;width:64px;height:28.7px;background:#000;border-radius:0 4px 4px 0;"></div>
<div style="position:absolute;left:0.00px;top:267.70px;width:64px;height:28.7px;background:#000;border-radius:0 4px 4px 0;"></div>
<div style="position:absolute;left:0.00px;top:325.10px;width:64px;height:28.7px;background:#000;border-radius:0 4px 4px 0;"></div>
<div style="position:absolute;left:0.00px;top:382.50px;width:64px;height:28.7px;background:#000;border-radius:0 4px 4px 0;"></div>
<div style="position:absolute;left:62.00px;top:388.67px;width:39px;height:2px;background:#111;"></div>
<svg style="left:98px;top:385.67px" width="6" height="8"><path d="M6 0 L6 8 L2 4 Z" fill="#111"/></svg>
<div style="position:absolute;left:62.00px;top:338.45px;width:39px;height:2px;background:#111;"></div>
<svg style="left:98px;top:335.45px" width="6" height="8"><path d="M6 0 L6 8 L2 4 Z" fill="#111"/></svg>
<div style="position:absolute;left:62.00px;top:288.23px;width:39px;height:2px;background:#111;"></div>
<svg style="left:98px;top:285.23px" width="6" height="8"><path d="M6 0 L6 8 L2 4 Z" fill="#111"/></svg>
<div style="position:absolute;left:0.00px;top:238.00px;width:101px;height:2px;background:#111;"></div>
<svg style="left:98px;top:235.00px" width="6" height="8"><path d="M6 0 L6 8 L2 4 Z" fill="#111"/></svg>
<div style="position:absolute;left:0.00px;top:438.90px;width:101px;height:2px;background:#111;"></div>
<svg style="left:98px;top:435.90px" width="6" height="8"><path d="M6 0 L6 8 L2 4 Z" fill="#111"/></svg>
<div style="position:absolute;left:62.00px;top:44.27px;width:39px;height:2px;background:#111;"></div>
<svg style="left:98px;top:41.27px" width="6" height="8"><path d="M6 0 L6 8 L2 4 Z" fill="#111"/></svg>
<div style="position:absolute;left:62.00px;top:-5.95px;width:39px;height:2px;background:#111;"></div>
<svg style="left:98px;top:-8.95px" width="6" height="8"><path d="M6 0 L6 8 L2 4 Z" fill="#111"/></svg>
<div style="position:absolute;left:62.00px;top:190.17px;width:39px;height:2px;background:#111;"></div>
<svg style="left:98px;top:187.17px" width="6" height="8"><path d="M6 0 L6 8 L2 4 Z" fill="#111"/></svg>
<div style="position:absolute;left:62.00px;top:142.33px;width:39px;height:2px;background:#111;"></div>
<svg style="left:98px;top:139.33px" width="6" height="8"><path d="M6 0 L6 8 L2 4 Z" fill="#111"/></svg>
<div style="position:absolute;left:0.00px;top:94.50px;width:101px;height:2px;background:#111;"></div>
<svg style="left:98px;top:91.50px" width="6" height="8"><path d="M6 0 L6 8 L2 4 Z" fill="#111"/></svg>
</div>
<div style="position:absolute;left:208px;top:641.8px;font-size:17px;line-height:1;color:#111;white-space:nowrap;">C4</div>
<div style="position:absolute;left:635.3px;top:635.8px;width:99.3px;height:28.7px;background:linear-gradient(#ffaa1c,#f07000);"></div>
<svg style="left:639px;top:643px;" width="44" height="16" viewBox="0 0 44 16"><g fill="none" stroke="#1a1000" stroke-width="1.6" stroke-linecap="round"><path d="M2 4 H10 M6 1.5 Q6 8 8 14 M10 6 Q3 9 3 12 Q4 15 8 12 Q11 8 12 8 Q15 9 14 12 Q13 14 10 14"/><path d="M18 4 Q18 12 21 13 Q22 12 23 10 M26 5 Q28 8 28 11"/><path d="M34 2 Q37 3 39 2 M32 7 Q38 5 40 8 Q40 13 34 15"/></g></svg>
<div style="position:absolute;left:637px;top:608.3px;font-size:18.5px;line-height:1;color:#fff;white-space:nowrap;">a,i,u</div>
<div style="position:absolute;left:134px;top:882px;width:1122px;height:18px;background:#04040c;"></div>
<svg style="left:241.5px;top:884px;" width="12" height="14" viewBox="0 0 12 14"><path d="M11 0.5 L11 13.5 L0.8 7 Z" fill="#ee8400"/></svg>
<div style="position:absolute;left:260px;top:883px;width:57px;height:16px;background:#ec8400;border-radius:6px;"></div>
<svg style="left:1018px;top:884.5px;" width="11" height="14" viewBox="0 0 11 14"><path d="M0.5 0.5 L0.5 13.5 L10.5 7 Z" fill="#ee8400"/></svg>
<svg style="left:1034px;top:883px;" width="17" height="17" viewBox="0 0 17 17"><circle cx="7.5" cy="7.5" r="5.8" fill="none" stroke="#dedede" stroke-width="1.7"/><path d="M11.5 11.5 L15.5 15.5" stroke="#dedede" stroke-width="2.2"/><path d="M4 7.5 H11" stroke="#dedede" stroke-width="1.8"/></svg>
<div style="position:absolute;left:1058.5px;top:888.5px;width:172px;height:5.5px;background:#535357;border-radius:3px;"></div>
<div style="position:absolute;left:1141.5px;top:883px;width:5.5px;height:16.5px;background:#ec8600;"></div>
<svg style="left:1238px;top:883px;" width="17" height="17" viewBox="0 0 17 17"><circle cx="7.5" cy="7.5" r="5.8" fill="none" stroke="#dedede" stroke-width="1.7"/><path d="M11.5 11.5 L15.5 15.5" stroke="#dedede" stroke-width="2.2"/><path d="M4 7.5 H11" stroke="#dedede" stroke-width="1.8"/><path d="M7.5 4 V11" stroke="#dedede" stroke-width="1.8"/></svg>
<div style="position:absolute;left:1256px;top:298.5px;width:18px;height:601.5px;background:#04040c;"></div>
<svg style="left:1257px;top:430.5px;" width="16" height="11" viewBox="0 0 16 11"><path d="M0.5 10.5 L15 10.5 L7.75 0.5 Z" fill="#ee8400"/></svg>
<div style="position:absolute;left:1257px;top:536px;width:16px;height:34.5px;background:#ec8400;border-radius:6px;"></div>
<svg style="left:1257px;top:644px;" width="16" height="11" viewBox="0 0 16 11"><path d="M0.5 0.5 L15 0.5 L7.75 10.5 Z" fill="#ee8400"/></svg>
<svg style="left:1257px;top:661.5px;" width="17" height="17" viewBox="0 0 17 17"><circle cx="7.5" cy="7.5" r="5.8" fill="none" stroke="#dedede" stroke-width="1.7"/><path d="M11.5 11.5 L15.5 15.5" stroke="#dedede" stroke-width="2.2"/><path d="M4 7.5 H11" stroke="#dedede" stroke-width="1.8"/></svg>
<div style="position:absolute;left:1262.5px;top:683.5px;width:5.5px;height:174px;background:#535357;border-radius:3px;"></div>
<div style="position:absolute;left:1257px;top:767px;width:16px;height:6.5px;background:#ec8600;"></div>
<svg style="left:1257px;top:864.5px;" width="17" height="17" viewBox="0 0 17 17"><circle cx="7.5" cy="7.5" r="5.8" fill="none" stroke="#dedede" stroke-width="1.7"/><path d="M11.5 11.5 L15.5 15.5" stroke="#dedede" stroke-width="2.2"/><path d="M4 7.5 H11" stroke="#dedede" stroke-width="1.8"/><path d="M7.5 4 V11" stroke="#dedede" stroke-width="1.8"/></svg>
<div style="position:absolute;left:833px;top:298.5px;width:2px;height:127px;background:#c8b400;"></div>
<div style="position:absolute;left:810px;top:398px;width:50px;height:24px;background:linear-gradient(90deg,#ffe400,#ffee30);border-radius:4px;"></div>
<div style="position:absolute;left:815px;top:402.5px;font-size:15.5px;line-height:1;color:#000;white-space:nowrap;">N</div>
<div style="position:absolute;left:833.2px;top:398px;width:1.6px;height:24px;background:#d8c400;"></div>
<div style="position:absolute;left:809.2px;top:427px;width:323px;height:110px;background:#2a2a30;border:1.2px solid #707074;"></div>
<div style="position:absolute;left:811.5px;top:430px;width:52px;height:104px;background:#3a3a3f;"></div>
<div style="position:absolute;left:688px;width:300px;text-align:center;top:474px;font-size:16px;line-height:1;color:#a4a4a8;white-space:nowrap;">N</div>
<div style="position:absolute;left:865.5px;top:430px;width:51px;height:50.5px;background:#555558;"></div>
<div style="position:absolute;left:741.0px;width:300px;text-align:center;top:448px;font-size:15.5px;line-height:1;color:#fff;white-space:nowrap;font-weight:bold;letter-spacing:-0.5px;">mf</div>
<div style="position:absolute;left:918.5px;top:430px;width:51px;height:50.5px;background:#555558;"></div>
<div style="position:absolute;left:794.0px;width:300px;text-align:center;top:448px;font-size:15.5px;line-height:1;color:#fff;white-space:nowrap;font-weight:bold;letter-spacing:-0.5px;">f</div>
<div style="position:absolute;left:971.5px;top:430px;width:51px;height:50.5px;background:#ec8300;"></div>
<div style="position:absolute;left:847.0px;width:300px;text-align:center;top:448px;font-size:15.5px;line-height:1;color:#fff;white-space:nowrap;font-weight:bold;letter-spacing:-0.5px;">ff</div>
<div style="position:absolute;left:1024.5px;top:430px;width:51px;height:50.5px;background:#555558;"></div>
<div style="position:absolute;left:900.0px;width:300px;text-align:center;top:448px;font-size:15.5px;line-height:1;color:#fff;white-space:nowrap;font-weight:bold;letter-spacing:-0.5px;">fff</div>
<div style="position:absolute;left:1077.5px;top:430px;width:51px;height:50.5px;background:#555558;"></div>
<div style="position:absolute;left:953.0px;width:300px;text-align:center;top:448px;font-size:15.5px;line-height:1;color:#fff;white-space:nowrap;font-weight:bold;letter-spacing:-0.5px;">ffff</div>
<div style="position:absolute;left:865.5px;top:482.5px;width:51px;height:50.5px;background:#555558;"></div>
<div style="position:absolute;left:741.0px;width:300px;text-align:center;top:500.5px;font-size:15.5px;line-height:1;color:#fff;white-space:nowrap;font-weight:bold;letter-spacing:-0.5px;">mp</div>
<div style="position:absolute;left:918.5px;top:482.5px;width:51px;height:50.5px;background:#555558;"></div>
<div style="position:absolute;left:794.0px;width:300px;text-align:center;top:500.5px;font-size:15.5px;line-height:1;color:#fff;white-space:nowrap;font-weight:bold;letter-spacing:-0.5px;">p</div>
<div style="position:absolute;left:971.5px;top:482.5px;width:51px;height:50.5px;background:#555558;"></div>
<div style="position:absolute;left:847.0px;width:300px;text-align:center;top:500.5px;font-size:15.5px;line-height:1;color:#fff;white-space:nowrap;font-weight:bold;letter-spacing:-0.5px;">pp</div>
<div style="position:absolute;left:1024.5px;top:482.5px;width:51px;height:50.5px;background:#555558;"></div>
<div style="position:absolute;left:900.0px;width:300px;text-align:center;top:500.5px;font-size:15.5px;line-height:1;color:#fff;white-space:nowrap;font-weight:bold;letter-spacing:-0.5px;">ppp</div>
<div style="position:absolute;left:1077.5px;top:482.5px;width:51px;height:50.5px;background:#555558;"></div>
<div style="position:absolute;left:953.0px;width:300px;text-align:center;top:500.5px;font-size:15.5px;line-height:1;color:#fff;white-space:nowrap;font-weight:bold;letter-spacing:-0.5px;">pppp</div>
<div style="position:absolute;left:231.6px;top:327px;width:1048px;height:102.2px;border:4.5px solid #ff0000;border-radius:16px;"></div>
<div style="position:absolute;left:0px;top:0px;width:1.2px;height:931px;background:#000;"></div>
<div style="position:absolute;left:0px;top:929.6px;width:1280px;height:1.4px;background:#000;"></div>
</body></html>
